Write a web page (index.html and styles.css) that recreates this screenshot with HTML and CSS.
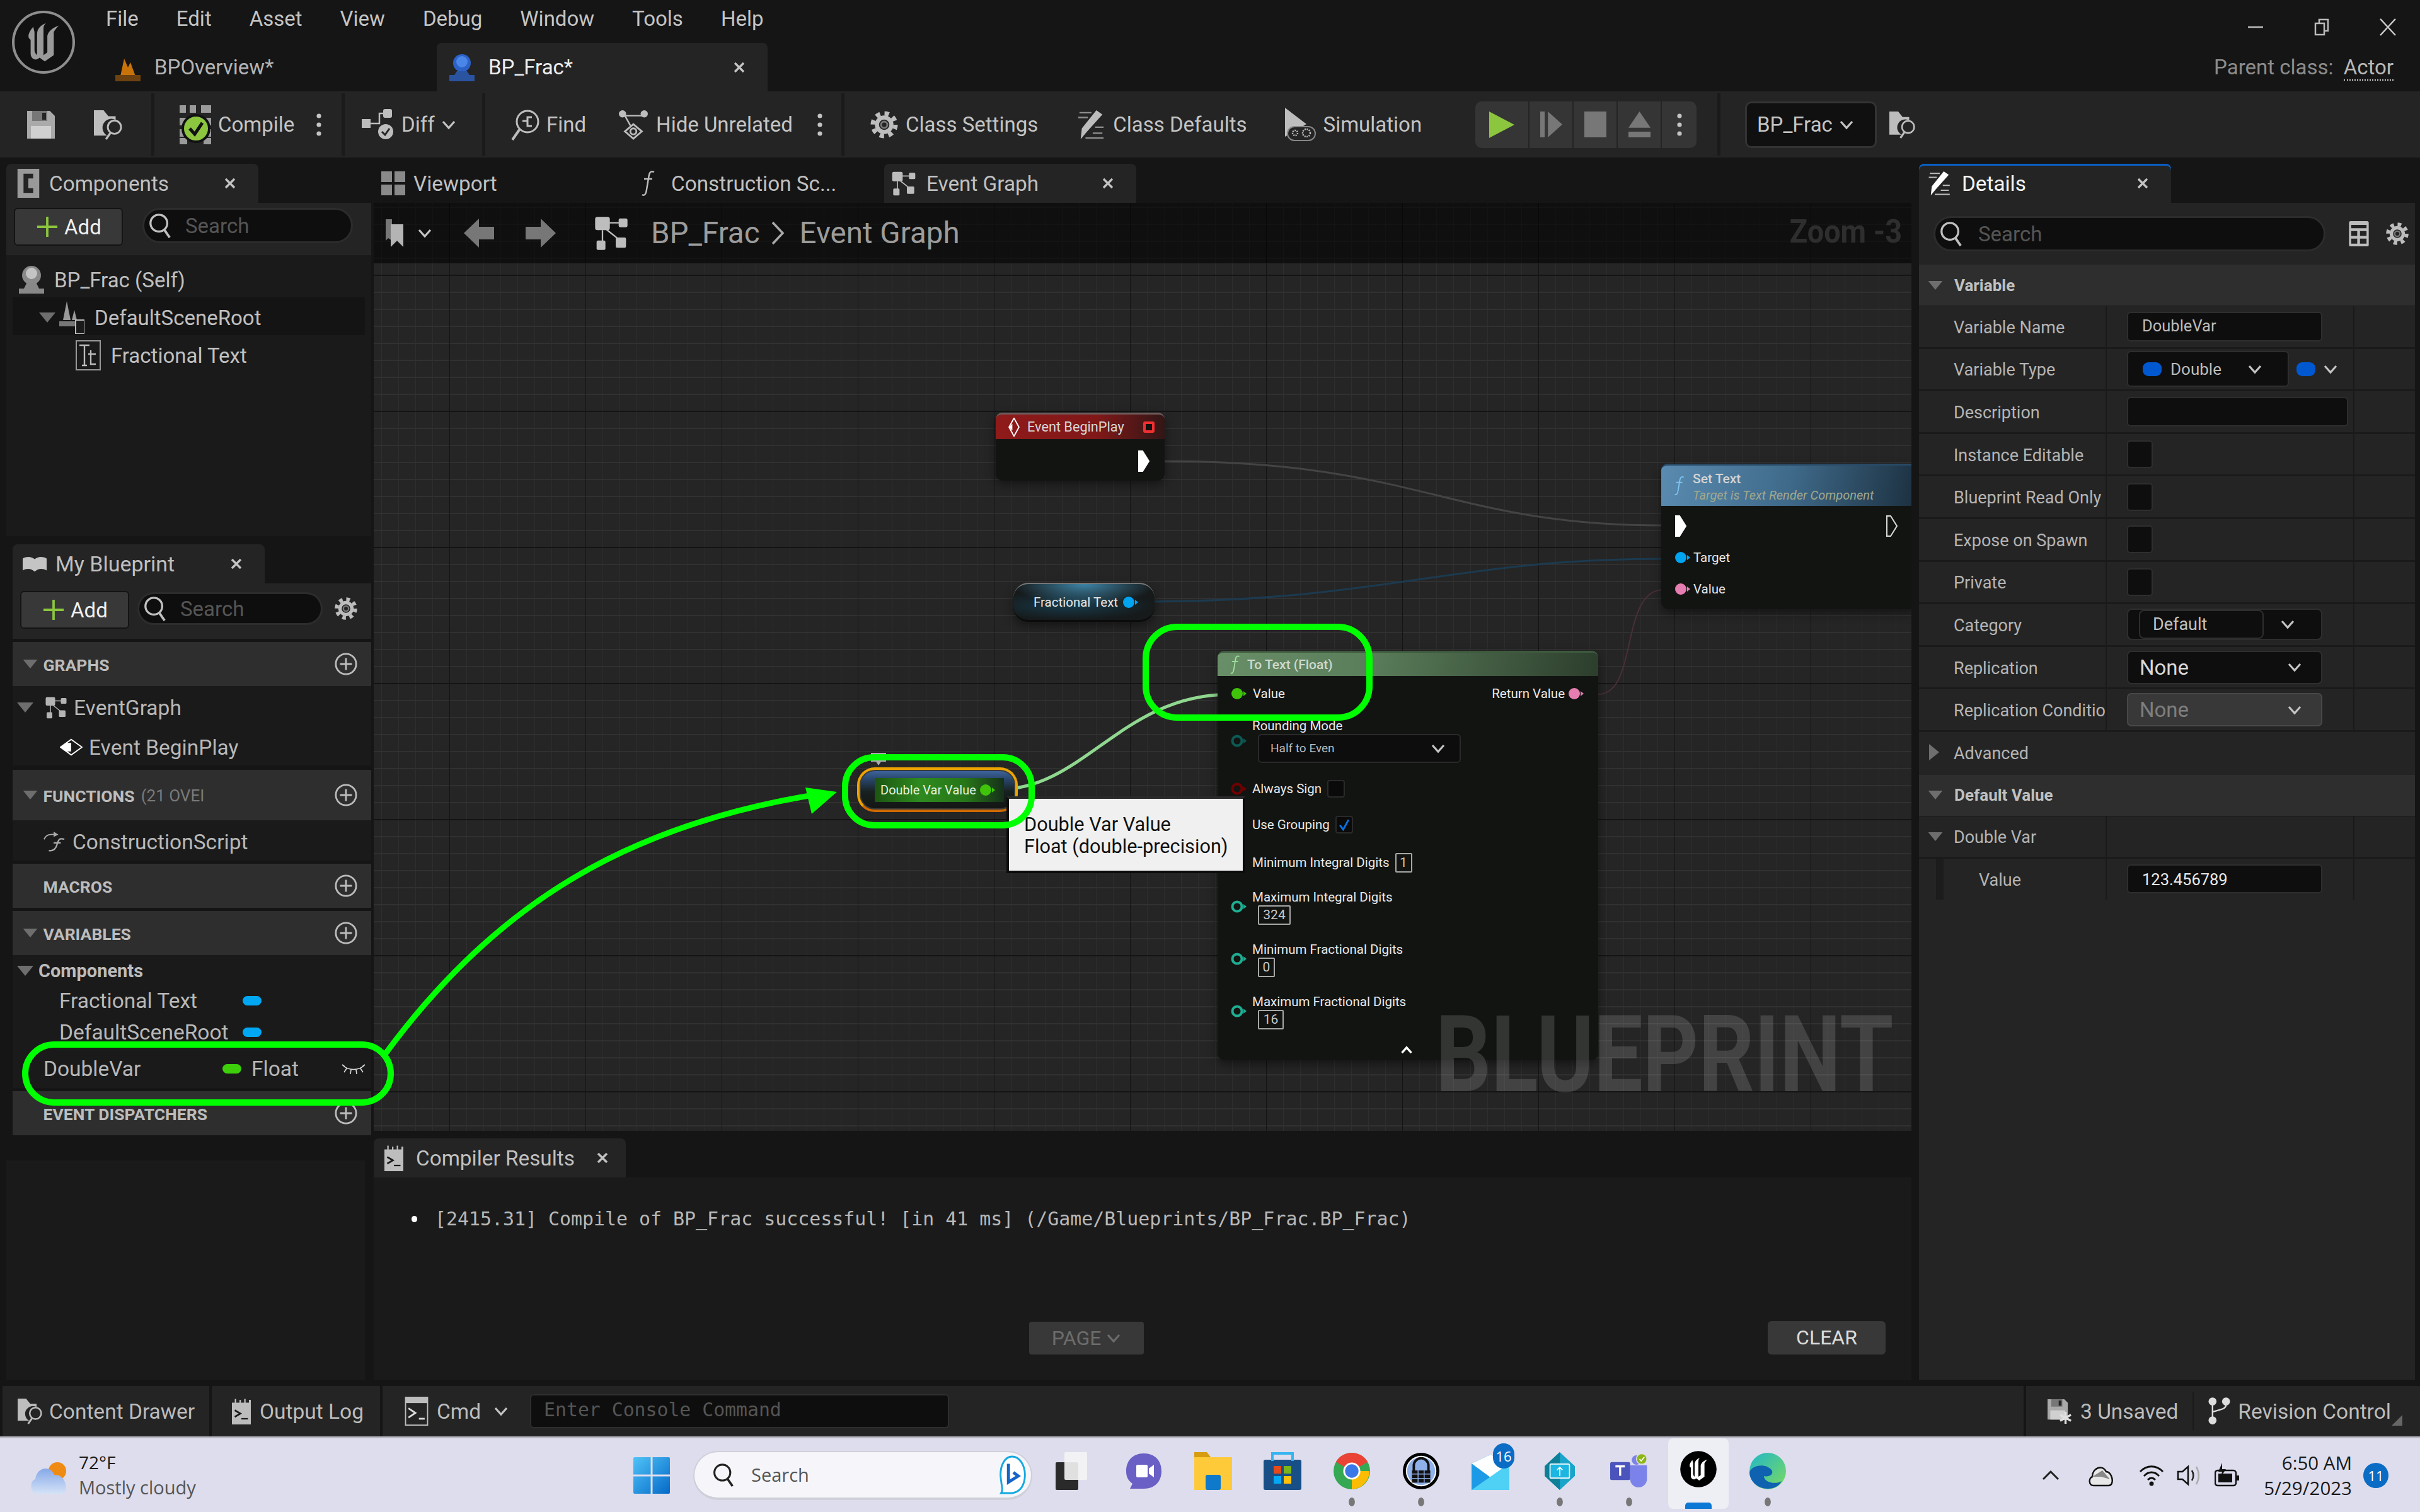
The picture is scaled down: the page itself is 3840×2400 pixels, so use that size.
FILE: index.html
```html
<!DOCTYPE html>
<html lang="en">
<head>
    <meta charset="UTF-8" />
    <title>BP_Frac - Unreal Editor</title>
    <link rel="stylesheet" href="styles.css">
</head>
<body>
    <svg class="defs" width="0" height="0">
        <symbol id="gear" viewBox="0 0 32 32">
            <circle cx="16" cy="16" r="12.5" fill="none" stroke="currentColor" stroke-width="5" stroke-dasharray="4.9 4.92"/>
            <circle cx="16" cy="16" r="8" fill="none" stroke="currentColor" stroke-width="4.5"/>
            <circle cx="16" cy="16" r="3.5" fill="none" stroke="#777" stroke-width="2"/>
        </symbol>
        <symbol id="chev" viewBox="0 0 24 16"><polyline points="3,3 12,13 21,3" fill="none" stroke="currentColor" stroke-width="3.2"/></symbol>
        <symbol id="search" viewBox="0 0 40 44">
            <circle cx="18" cy="18" r="14" fill="none" stroke="currentColor" stroke-width="3.5"/>
            <line x1="27" y1="29" x2="36" y2="42" stroke="currentColor" stroke-width="4"/>
        </symbol>
        <symbol id="close" viewBox="0 0 20 20"><path d="M3 3 17 17M17 3 3 17" stroke="currentColor" stroke-width="3.4" fill="none"/></symbol>
        <symbol id="plusc" viewBox="0 0 40 40">
            <circle cx="20" cy="20" r="17" fill="none" stroke="currentColor" stroke-width="3"/>
            <path d="M20 10V30M10 20H30" stroke="currentColor" stroke-width="3"/>
        </symbol>
        <symbol id="plus" viewBox="0 0 36 36"><path d="M18 1V35M1 18H35" stroke="#8cc63f" stroke-width="4"/></symbol>
        <symbol id="tri" viewBox="0 0 26 16"><path d="M0 0H26L13 16Z" fill="currentColor"/></symbol>
        <symbol id="graph" viewBox="0 0 48 48">
            <rect x="2" y="2" width="20" height="18" rx="3" fill="currentColor"/>
            <rect x="34" y="4" width="12" height="12" rx="2" fill="currentColor"/>
            <rect x="4" y="34" width="12" height="13" rx="2" fill="currentColor"/>
            <rect x="30" y="30" width="14" height="14" rx="2" fill="currentColor"/>
            <path d="M20 10H36M12 20V36M16 18 36 34" stroke="currentColor" stroke-width="2" fill="none"/>
        </symbol>
        <symbol id="floppy" viewBox="0 0 44 44">
            <path d="M0 0H36L44 8V44H0Z" fill="#aaa"/>
            <rect x="8" y="0" width="24" height="16" fill="#777"/>
            <rect x="24" y="3" width="6" height="11" fill="#242424"/>
            <rect x="6" y="24" width="32" height="20" fill="#d0d0d0"/>
        </symbol>
        <symbol id="folder" viewBox="0 0 48 52">
            <path d="M0 2H16L24 12H36V18A14 14 0 0 0 22 44H0Z" fill="#bdbdbd"/>
            <circle cx="34" cy="30" r="11" fill="none" stroke="#bdbdbd" stroke-width="3"/>
            <line x1="27" y1="40" x2="20" y2="50" stroke="#bdbdbd" stroke-width="3.5"/>
        </symbol>
        <symbol id="dots" viewBox="0 0 10 36"><circle cx="5" cy="4" r="3.6" fill="currentColor"/><circle cx="5" cy="18" r="3.6" fill="currentColor"/><circle cx="5" cy="32" r="3.6" fill="currentColor"/></symbol>
        <symbol id="pencil" viewBox="0 0 48 48">
            <path d="M32 0 42 7 16 36 6 48 8 30Z" fill="currentColor"/>
            <path d="M4 4H24M2 12H18M30 28H44M26 38H42M14 46H44" stroke="currentColor" stroke-width="2.5" opacity=".7"/>
        </symbol>
        <symbol id="pin" viewBox="0 0 25 20"><circle cx="10" cy="10" r="9" fill="currentColor"/><path d="M20 6 25 10 20 14Z" fill="currentColor"/></symbol>
        <symbol id="pin-o" viewBox="0 0 25 20"><circle cx="10" cy="10" r="7.5" fill="none" stroke="currentColor" stroke-width="4"/><path d="M20 6 25 10 20 14Z" fill="currentColor"/></symbol>
        <symbol id="exec" viewBox="0 0 20 36"><path d="M2 2H8L18 18 8 34H2Z" fill="currentColor" stroke="currentColor" stroke-width="2"/></symbol>
        <symbol id="exec-o" viewBox="0 0 20 36"><path d="M2 2H8L18 18 8 34H2Z" fill="none" stroke="currentColor" stroke-width="2"/></symbol>
        <symbol id="func" viewBox="0 0 24 44"><path d="M21 4C14 1 13 7 12 14L9 32C8 40 5 42 2 40M5 15H18" fill="none" stroke="currentColor" stroke-width="2.4"/></symbol>
        <symbol id="term" viewBox="0 0 40 56">
            <path d="M0 10H6V2H9V10H16V4H19V10H26V2H29V10H36V4H40V56H0Z" fill="#bdbdbd"/>
            <path d="M6 26 18 33 6 40" fill="none" stroke="#1a1a1a" stroke-width="3.5"/>
            <path d="M20 44H34" stroke="#1a1a1a" stroke-width="3"/>
        </symbol>
        <symbol id="actor" viewBox="0 0 40 44">
            <circle cx="20" cy="15" r="15" fill="#8a8a8a"/>
            <circle cx="20" cy="12" r="9" fill="#c4c4c4"/>
            <path d="M12 28H28L32 36H40V44H0V36H8Z" fill="#888"/>
        </symbol>
        <symbol id="ue" viewBox="0 0 100 100">
            <path d="M34 26C24 38 26 44 30 46V68C30 76 38 80 44 74L52 80 66 70V34C70 28 72 26 74 24 64 28 58 32 56 40V66L50 70V30C50 24 52 22 54 20 44 24 40 30 40 38V70C36 66 36 64 36 60V34Z" fill="currentColor"/>
        </symbol>
    </svg>

    <header class="titlebar">
        <svg class="ue-logo" viewBox="0 0 100 100">
            <circle cx="50" cy="50" r="47" fill="#111" stroke="#8e8e8e" stroke-width="4"/>
            <use href="#ue" class="ue-mark" width="100" height="100"/>
        </svg>
        <div class="title-mid">
            <nav class="menu">
                <span>File</span><span>Edit</span><span>Asset</span><span>View</span><span>Debug</span><span>Window</span><span>Tools</span><span>Help</span>
            </nav>
            <div class="doc-tabs">
                <div class="doc-tab">
                    <svg class="doc-icon" viewBox="0 0 40 44"><path d="M8 36 14 8 20 22 24 14 32 36Z" fill="#c8730a"/><rect x="0" y="34" width="40" height="10" fill="#6e4210"/></svg>
                    <span>BPOverview*</span>
                </div>
                <div class="doc-tab active">
                    <svg class="doc-icon" viewBox="0 0 40 44">
                        <circle cx="20" cy="15" r="14" fill="#2c62c8"/><circle cx="20" cy="13" r="9" fill="#4a86e8"/>
                        <path d="M12 28H28L32 34H40V44H0V34H8Z" fill="#2a53a0"/>
                    </svg>
                    <span>BP_Frac*</span>
                    <svg class="x-icon"><use href="#close"/></svg>
                </div>
            </div>
        </div>
        <div class="title-right">
            <div class="win-btns">
                <svg class="win-btn" viewBox="0 0 28 28"><path d="M2 14H26" stroke="#bbb" stroke-width="2.5"/></svg>
                <svg class="win-btn" viewBox="0 0 28 28"><path d="M4 8H18V26H4ZM10 8V2H24V20H18" fill="none" stroke="#bbb" stroke-width="2.5"/></svg>
                <svg class="win-btn" viewBox="0 0 28 28"><path d="M2 1 26 27M26 1 2 27" stroke="#ccc" stroke-width="2.5"/></svg>
            </div>
            <div class="parent-class">Parent class: <span class="parent-link">Actor</span></div>
        </div>
    </header>

    <section class="toolbar">
        <div class="tb-group g1">
            <svg class="tb-ic floppy-ic"><use href="#floppy"/></svg>
            <svg class="tb-ic"><use href="#folder"/></svg>
        </div>
        <div class="tb-group g2">
            <svg class="tb-ic compile-ic" viewBox="0 0 50 62">
                <path d="M0 0H10V12H0ZM16 0H26V12H16ZM34 0H50V12H34ZM0 20H10V32H0ZM42 20H50V32H42ZM0 38H10V50H0ZM42 38H50V50H42ZM0 52H12V62H0ZM38 52H50V62H38Z" fill="#9a9a9a"/>
                <circle cx="26" cy="37" r="21" fill="#8cc63f" stroke="#111" stroke-width="4"/>
                <path d="M16 37 24 46 36 28" fill="none" stroke="#111" stroke-width="5"/>
            </svg>
            <span class="tb-label">Compile</span>
            <svg class="dots-ic compile-dots"><use href="#dots"/></svg>
        </div>
        <div class="tb-group g3">
            <svg class="tb-ic diff-ic" viewBox="0 0 52 50">
                <rect x="0" y="16" width="14" height="14" fill="#bdbdbd"/><rect x="34" y="0" width="14" height="14" rx="3" fill="#bdbdbd"/>
                <path d="M14 23H28V7H34" stroke="#bdbdbd" stroke-width="2.5" fill="none"/>
                <circle cx="38" cy="36" r="12" fill="#bdbdbd"/><path d="M32 36 37 41 44 31" stroke="#242424" stroke-width="3" fill="none"/>
            </svg>
            <span class="tb-label">Diff</span>
            <svg class="chev-ic"><use href="#chev"/></svg>
        </div>
        <div class="tb-group g4">
            <svg class="tb-ic" viewBox="0 0 44 50">
                <circle cx="26" cy="20" r="17" fill="none" stroke="#bdbdbd" stroke-width="3"/>
                <path d="M13 33 2 49" stroke="#bdbdbd" stroke-width="4"/>
                <path d="M18 19H26V13H33M26 19V27H33" stroke="#bdbdbd" stroke-width="3" fill="none"/>
            </svg>
            <span class="tb-label">Find</span>
            <svg class="tb-ic hide-ic" viewBox="0 0 48 50">
                <circle cx="6" cy="7" r="6" fill="#bdbdbd"/><circle cx="42" cy="7" r="6" fill="#bdbdbd"/>
                <path d="M6 10H42M10 10 20 28" stroke="#bdbdbd" stroke-width="2.5"/>
                <path d="M10 36 24 24 38 36 24 48Z" fill="none" stroke="#bdbdbd" stroke-width="3"/>
                <circle cx="24" cy="36" r="5" fill="none" stroke="#bdbdbd" stroke-width="3"/>
            </svg>
            <span class="tb-label hide-label">Hide Unrelated</span>
            <svg class="dots-ic hide-dots"><use href="#dots"/></svg>
        </div>
        <div class="tb-group g5">
            <svg class="tb-ic"><use href="#gear"/></svg>
            <span class="tb-label">Class Settings</span>
            <svg class="tb-ic defaults-ic"><use href="#pencil"/></svg>
            <span class="tb-label">Class Defaults</span>
            <svg class="tb-ic sim-ic" viewBox="0 0 50 54">
                <path d="M0 0 34 26 0 46Z" fill="#bdbdbd"/>
                <rect x="4" y="30" width="44" height="22" rx="11" fill="#242424" stroke="#888" stroke-width="2"/>
                <circle cx="16" cy="40" r="4" fill="none" stroke="#bbb" stroke-width="2.5" stroke-dasharray="2 1.5"/>
                <circle cx="34" cy="40" r="6" fill="none" stroke="#bbb" stroke-width="2.5" stroke-dasharray="2 1.5"/>
            </svg>
            <span class="tb-label">Simulation</span>
        </div>
        <div class="play-group">
            <div class="play-seg seg-a"><svg class="seg-ic seg-play" viewBox="0 0 40 54" preserveAspectRatio="none"><path d="M0 0 40 27 0 54Z" fill="#8cc63f"/></svg></div>
            <div class="play-seg"><svg class="seg-ic" viewBox="0 0 40 54" preserveAspectRatio="none"><path d="M0 0H8V54H0ZM14 0 40 27 14 54Z" fill="#777"/></svg></div>
            <div class="play-seg"><svg class="seg-ic" viewBox="0 0 40 54" preserveAspectRatio="none"><rect x="0" y="0" width="40" height="54" fill="#777"/></svg></div>
            <div class="play-seg"><svg class="seg-ic" viewBox="0 0 40 54" preserveAspectRatio="none"><path d="M0 34 20 0 40 34ZM0 42H40V54H0Z" fill="#777"/></svg></div>
            <div class="play-seg seg-end"><svg class="dots-ic"><use href="#dots"/></svg></div>
        </div>
        <div class="tb-sep"></div>
        <div class="debug-select">
            <span>BP_Frac</span>
            <svg class="chev-ic"><use href="#chev"/></svg>
        </div>
        <svg class="tb-ic browse-ic"><use href="#folder"/></svg>
    </section>

    <main class="workspace">
        <div class="col-left">
            <div class="tab c-comp"><svg class="tab-ic" viewBox="0 0 36 48"><path d="M0 0H36V48H0Z" fill="#999"/><path d="M26 8H10V40H26V32H18V16H26Z" fill="#242424"/></svg><span class="tab-title">Components</span><svg class="x-icon tab-x"><use href="#close"/></svg></div>
            <div class="comp-panel">
                <div class="panel-bar">
                    <div class="add-btn"><svg class="plus-ic"><use href="#plus"/></svg><span>Add</span></div>
                    <div class="search-box comp-search"><svg class="search-ic"><use href="#search"/></svg><span>Search</span></div>
                </div>
                <div class="tree">
                    <div class="tree-row self-row"><svg class="row-ic"><use href="#actor"/></svg><span>BP_Frac (Self)</span></div>
                    <div class="tree-row root-row">
                        <svg class="tree-tri"><use href="#tri"/></svg>
                        <svg class="row-ic" viewBox="0 0 40 52"><path d="M12 0 18 30H6ZM24 14 28 30H20Z" fill="#999"/><rect x="0" y="32" width="30" height="8" fill="#777"/><rect x="26" y="30" width="14" height="22" fill="#1a1a1a" stroke="#bbb" stroke-width="2"/></svg>
                        <span>DefaultSceneRoot</span>
                    </div>
                    <div class="tree-row text-row"><svg class="row-ic" viewBox="0 0 40 48"><rect x="1" y="1" width="38" height="46" fill="none" stroke="#999" stroke-width="2"/><path d="M6 8H22M14 8V40M10 40H18M24 16V38H32M20 22H32" stroke="#bbb" stroke-width="2.4" fill="none"/></svg><span>Fractional Text</span></div>
                </div>
            </div>
            <div class="bp-panel">
                <div class="tab bp-tab">
                    <svg class="tab-ic book-ic" viewBox="0 0 40 26"><path d="M0 4C8 0 14 1 20 5 26 1 32 0 40 4V24C32 20 26 21 20 26 14 21 8 20 0 24Z" fill="#c4c4c4"/></svg>
                    <span class="tab-title">My Blueprint</span><svg class="x-icon tab-x"><use href="#close"/></svg>
                </div>
                <div class="panel-bar bp-bar">
                    <div class="add-btn"><svg class="plus-ic"><use href="#plus"/></svg><span>Add</span></div>
                    <div class="search-box bp-search"><svg class="search-ic"><use href="#search"/></svg><span>Search</span></div>
                    <svg class="bar-gear"><use href="#gear"/></svg>
                </div>
                <div class="sect s-graphs"><svg class="sect-tri"><use href="#tri"/></svg><b>GRAPHS</b><svg class="plus-c"><use href="#plusc"/></svg></div>
                <div class="item i-graph"><svg class="tree-tri"><use href="#tri"/></svg><svg class="item-ic"><use href="#graph"/></svg><span>EventGraph</span></div>
                <div class="item i-begin"><svg class="item-ic" viewBox="0 0 38 28"><path d="M19 1 37 14 19 27 1 14Z" fill="none" stroke="#fff" stroke-width="2"/><path d="M1 14 11 7H19V21H11Z" fill="#fff"/></svg><span>Event BeginPlay</span></div>
                <div class="sect s-funcs"><svg class="sect-tri"><use href="#tri"/></svg><b>FUNCTIONS</b><span class="sect-note">(21 OVEI</span><svg class="plus-c"><use href="#plusc"/></svg></div>
                <div class="item i-script"><svg class="item-ic" viewBox="0 0 38 36"><path d="M2 14C6 6 12 5 22 6" fill="none" stroke="#aaa" stroke-width="2"/><path d="M18 1 26 6 18 10Z" fill="#aaa"/><path d="M36 14C28 11 26 15 24 22 22 30 18 34 10 33M18 20H30" fill="none" stroke="#aaa" stroke-width="2.4"/></svg><span>ConstructionScript</span></div>
                <div class="sect s-macros"><b>MACROS</b><svg class="plus-c"><use href="#plusc"/></svg></div>
                <div class="sect s-vars"><svg class="sect-tri"><use href="#tri"/></svg><b>VARIABLES</b><svg class="plus-c"><use href="#plusc"/></svg></div>
                <div class="item i-cat"><svg class="tree-tri"><use href="#tri"/></svg><b>Components</b></div>
                <div class="item i-var"><span>Fractional Text</span><i class="type-pill blue"></i></div>
                <div class="item i-var i-var2"><span>DefaultSceneRoot</span><i class="type-pill blue"></i></div>
                <div class="item i-double">
                    <span class="dv-name">DoubleVar</span><i class="type-pill green"></i><span class="dv-type">Float</span>
                    <svg class="eye-ic" viewBox="0 0 38 20"><path d="M1 4C10 14 28 14 37 4M8 10 4 16M15 12 14 19M23 12 24 19M30 10 34 16M1 4 5 7M37 4 33 7" fill="none" stroke="#ddd" stroke-width="1.6"/></svg>
                </div>
                <div class="sect s-disp"><b>EVENT DISPATCHERS</b><svg class="plus-c"><use href="#plusc"/></svg></div>
            </div>
            <div class="left-fill"></div>
        </div>

        <div class="col-mid">
            <div class="graph-tabs">
                <div class="tab plain t-view"><svg class="tab-ic" viewBox="0 0 38 38"><path d="M0 0H17V17H0ZM21 0H38V17H21ZM0 21H17V38H0ZM21 21H38V38H21Z" fill="#8a8a8a"/></svg><span class="tab-title">Viewport</span></div>
                <div class="tab plain t-cons"><svg class="tab-ic f-ic"><use href="#func"/></svg><span class="tab-title">Construction Sc...</span></div>
                <div class="tab t-event"><svg class="tab-ic"><use href="#graph"/></svg><span class="tab-title">Event Graph</span><svg class="x-icon tab-x"><use href="#close"/></svg></div>
            </div>
            <div class="graph">
                <div class="crumbs">
                    <svg class="crumb-book" viewBox="0 0 30 44"><path d="M0 0H10V34L4 30 0 34Z" fill="#777"/><path d="M8 8H28V44L18 34 8 44Z" fill="#b4b4b4"/></svg>
                    <svg class="chev-ic crumb-chev"><use href="#chev"/></svg>
                    <svg class="crumb-arrow" viewBox="0 0 48 46"><path d="M0 23 24 0V13H48V33H24V46Z" fill="#777"/></svg>
                    <svg class="crumb-arrow fwd" viewBox="0 0 48 46"><path d="M48 23 24 0V13H0V33H24V46Z" fill="#777"/></svg>
                    <svg class="crumb-graph"><use href="#graph"/></svg>
                    <span class="crumb-text">BP_Frac</span>
                    <svg class="crumb-sep" viewBox="0 0 24 38" preserveAspectRatio="none"><polyline points="4,2 20,19 4,36" fill="none" stroke="#aaa" stroke-width="3.5"/></svg>
                    <span class="crumb-text">Event Graph</span>
                    <span class="zoom-label">Zoom -3</span>
                </div>

                <svg class="wires" viewBox="593 322 2440 1473">
                    <path d="M1848 732C2250 732 2300 834 2638 834" stroke="#444" stroke-width="3" fill="none"/>
                    <path d="M1805 955C2200 955 2300 887 2640 887" stroke="#1c3a4f" stroke-width="3" fill="none"/>
                    <path d="M2536 1102C2600 1102 2570 936 2640 936" stroke="#4a2f38" stroke-width="2" fill="none"/>
                    <path d="M1585 1253C1720 1253 1780 1102 1953 1102" stroke="#90d890" stroke-width="5" fill="none"/>
                </svg>

                <div class="node n-begin">
                    <div class="node-head">
                        <svg class="ev-ic" viewBox="0 0 28 46"><path d="M14 1 26 23 14 45 2 23Z" fill="none" stroke="#fff" stroke-width="3"/><path d="M2 23 10 15V31Z" fill="#fff"/></svg>
                        <span>Event BeginPlay</span><i class="ev-dot"></i>
                    </div>
                    <svg class="exec-ic begin-exec"><use href="#exec"/></svg>
                </div>

                <div class="node n-frac">
                    <span>Fractional Text</span><svg class="pin-ic c-blue"><use href="#pin"/></svg>
                </div>

                <div class="node n-set">
                    <div class="node-head">
                        <svg class="f-head"><use href="#func"/></svg>
                        <div class="head-lines"><b>Set Text</b><em>Target is Text Render Component</em></div>
                    </div>
                    <div class="pin-row exec-row">
                        <svg class="exec-ic"><use href="#exec"/></svg>
                        <svg class="exec-ic c-exec"><use href="#exec-o"/></svg>
                    </div>
                    <div class="pin-row set-pin"><svg class="pin-ic c-blue"><use href="#pin"/></svg><span>Target</span></div>
                    <div class="pin-row set-pin"><svg class="pin-ic c-pink"><use href="#pin"/></svg><span>Value</span></div>
                </div>

                <div class="node n-text">
                    <div class="node-head">
                        <svg class="f-head"><use href="#func"/></svg><b>To Text (Float)</b>
                    </div>
                    <div class="text-body">
                        <div class="pin-row r-value">
                            <svg class="pin-ic c-green"><use href="#pin"/></svg><span>Value</span>
                            <span class="ret">Return Value</span><svg class="pin-ic c-pink"><use href="#pin"/></svg>
                        </div>
                        <div class="pin-stack">
                            <svg class="pin-ic c-dim stack-pin rounding-pin"><use href="#pin-o"/></svg>
                            <span>Rounding Mode</span>
                            <div class="node-select"><span>Half to Even</span><svg class="chev-ic"><use href="#chev"/></svg></div>
                        </div>
                        <div class="pin-row r-check">
                            <svg class="pin-ic c-red"><use href="#pin-o"/></svg><span>Always Sign</span><i class="node-check"></i>
                        </div>
                        <div class="pin-row r-check r-plain r-group">
                            <span>Use Grouping</span>
                            <i class="node-check"><svg viewBox="0 0 28 28"><path d="M6 15 12 23 22 5" fill="none" stroke="#0a70e0" stroke-width="3.4"/></svg></i>
                        </div>
                        <div class="pin-row r-check r-plain r-minint"><span>Minimum Integral Digits</span><i class="num-box nb-1">1</i></div>
                        <div class="pin-stack r-maxint">
                            <svg class="pin-ic c-teal stack-pin"><use href="#pin-o"/></svg>
                            <span>Maximum Integral Digits</span><i class="num-box nb-3">324</i>
                        </div>
                        <div class="pin-stack">
                            <svg class="pin-ic c-teal stack-pin"><use href="#pin-o"/></svg>
                            <span>Minimum Fractional Digits</span><i class="num-box nb-1">0</i>
                        </div>
                        <div class="pin-stack">
                            <svg class="pin-ic c-teal stack-pin"><use href="#pin-o"/></svg>
                            <span>Maximum Fractional Digits</span><i class="num-box nb-2">16</i>
                        </div>
                    </div>
                    <svg class="node-fold" viewBox="0 0 24 16"><polyline points="3,13 12,3 21,13" fill="none" stroke="#fff" stroke-width="4"/></svg>
                </div>

                <svg class="comment-ic" viewBox="0 0 26 22"><path d="M1 1H25V15H17L13 21 9 15H1Z" fill="#aaa"/><path d="M6 5V11M11 5V11M16 5V11M21 5V11" stroke="#222" stroke-width="2.5"/></svg>
                <div class="node n-var">
                    <div class="var-band"><span>Double Var Value</span><svg class="pin-ic c-green"><use href="#pin"/></svg></div>
                </div>
                <div class="tooltip">Double Var Value<br>Float (double-precision)</div>
                <div class="watermark">BLUEPRINT</div>
            </div>

            <div class="compile-panel">
                <div class="tab c-tab"><svg class="tab-ic"><use href="#term"/></svg><span class="tab-title">Compiler Results</span><svg class="x-icon tab-x"><use href="#close"/></svg></div>
                <div class="compile-body">
                    <ul class="log"><li>[2415.31] Compile of BP_Frac successful! [in 41 ms] (/Game/Blueprints/BP_Frac.BP_Frac)</li></ul>
                    <div class="compile-foot">
                        <div class="btn-page"><span>PAGE</span><svg class="chev-ic"><use href="#chev"/></svg></div>
                        <div class="btn-clear">CLEAR</div>
                    </div>
                </div>
            </div>
        </div>

        <div class="col-right">
            <div class="tab details-tab"><svg class="tab-ic white-ic"><use href="#pencil"/></svg><span class="tab-title">Details</span><svg class="x-icon tab-x"><use href="#close"/></svg></div>
            <div class="details">
                <div class="details-search">
                    <div class="search-box d-search"><svg class="search-ic"><use href="#search"/></svg><span>Search</span></div>
                    <svg class="table-ic" viewBox="0 0 36 46"><rect width="36" height="46" rx="3" fill="#bdbdbd"/><path d="M4 7H32V13H4ZM4 18H15V27H4ZM20 18H32V27H20ZM4 32H15V41H4ZM20 32H32V41H20Z" fill="#242424"/></svg>
                    <svg class="d-gear"><use href="#gear"/></svg>
                </div>
                <div class="d-sect"><svg class="sect-tri"><use href="#tri"/></svg><b>Variable</b></div>
                <div class="d-rows">
                    <div class="d-row"><label>Variable Name</label><div class="d-val"><div class="inp">DoubleVar</div></div><div></div></div>
                    <div class="d-row"><label>Variable Type</label><div class="d-val">
                        <div class="type-select"><i class="type-pill navy"></i><span>Double</span><svg class="chev-ic"><use href="#chev"/></svg></div>
                        <i class="type-pill navy after"></i><svg class="chev-ic"><use href="#chev"/></svg>
                    </div><div></div></div>
                    <div class="d-row"><label>Description</label><div class="d-val"><div class="inp wide"></div></div><div></div></div>
                    <div class="d-row"><label>Instance Editable</label><div class="d-val"><i class="d-check"></i></div><div></div></div>
                    <div class="d-row"><label>Blueprint Read Only</label><div class="d-val"><i class="d-check"></i></div><div></div></div>
                    <div class="d-row"><label>Expose on Spawn</label><div class="d-val"><i class="d-check"></i></div><div></div></div>
                    <div class="d-row"><label>Private</label><div class="d-val"><i class="d-check"></i></div><div></div></div>
                    <div class="d-row"><label>Category</label><div class="d-val"><div class="cat-combo"><div class="cat-inner">Default</div><svg class="chev-ic"><use href="#chev"/></svg></div></div><div></div></div>
                    <div class="d-row"><label>Replication</label><div class="d-val"><div class="rep-select"><span>None</span><svg class="chev-ic"><use href="#chev"/></svg></div></div><div></div></div>
                    <div class="d-row"><label>Replication Conditio</label><div class="d-val"><div class="rep-select off"><span>None</span><svg class="chev-ic"><use href="#chev"/></svg></div></div><div></div></div>
                    <div class="d-row plain-row"><svg class="side-tri" viewBox="0 0 16 26"><path d="M0 0 16 13 0 26Z" fill="currentColor"/></svg><label>Advanced</label></div>
                </div>
                <div class="d-sect sect-default"><svg class="sect-tri"><use href="#tri"/></svg><b>Default Value</b></div>
                <div class="d-rows">
                    <div class="d-row"><label class="tri-label"><svg class="sect-tri"><use href="#tri"/></svg>Double Var</label><div class="d-val"></div><div></div></div>
                    <div class="d-row value-row"><label>Value</label><div class="d-val"><div class="inp bright">123.456789</div></div><div></div></div>
                </div>
            </div>
        </div>
    </main>

    <footer class="statusbar">
        <div class="st-item st-drawer"><svg class="st-ic"><use href="#folder"/></svg><span>Content Drawer</span></div>
        <div class="st-item st-log"><svg class="st-ic log-ic"><use href="#term"/></svg><span>Output Log</span></div>
        <div class="st-item st-cmd">
            <svg class="st-ic" viewBox="0 0 40 50"><rect x="1" y="1" width="38" height="48" fill="none" stroke="#bdbdbd" stroke-width="2"/><rect x="1" y="1" width="38" height="10" fill="#bdbdbd"/><path d="M6 20 18 28 6 36" fill="none" stroke="#ddd" stroke-width="3"/><path d="M24 38H34" stroke="#ddd" stroke-width="3"/></svg>
            <span>Cmd</span><svg class="chev-ic"><use href="#chev"/></svg>
            <div class="console">Enter Console Command</div>
        </div>
        <div class="st-item st-right">
            <svg class="st-ic" viewBox="0 0 42 46"><use href="#floppy" width="34" height="40"/><path d="M30 24V44M21 29 39 39M39 29 21 39" stroke="#e0e0e0" stroke-width="3.5"/></svg>
            <span>3 Unsaved</span>
            <i class="st-sep"></i>
            <svg class="st-ic rev-ic" viewBox="0 0 36 46"><circle cx="7" cy="7" r="6.5" fill="#ddd"/><circle cx="29" cy="7" r="6.5" fill="#ddd"/><circle cx="7" cy="38" r="6.5" fill="#ddd"/><path d="M7 7V38M29 7V12C29 20 20 20 7 24" stroke="#ddd" stroke-width="2.5" fill="none"/></svg>
            <span>Revision Control</span>
            <svg class="grip" viewBox="0 0 18 18"><path d="M18 0V18H0Z" fill="#666"/></svg>
        </div>
    </footer>

    <footer class="taskbar">
        <div class="weather">
            <svg class="weather-ic" viewBox="0 0 60 50">
                <defs><linearGradient id="cloudG" x1="0" y1="0" x2="0" y2="1"><stop offset="0" stop-color="#86a9e8"/><stop offset="1" stop-color="#d4e2f7"/></linearGradient></defs>
                <ellipse cx="43" cy="14" rx="14" ry="14" fill="#ef8a12"/>
                <path d="M10 50C0 50 -2 30 8 27 10 8 32 4 38 20 58 18 62 50 50 50Z" fill="url(#cloudG)"/>
            </svg>
            <div class="weather-text"><span class="w-temp">72°F</span><span class="w-desc">Mostly cloudy</span></div>
        </div>
        <svg class="start" viewBox="0 0 58 58">
            <defs><linearGradient id="winG" x1="0" y1="0" x2="1" y2="1"><stop offset="0" stop-color="#4fc3f7"/><stop offset="1" stop-color="#0569c8"/></linearGradient></defs>
            <path d="M0 2Q0 0 2 0H27.500V27.500H0ZM30.500 0H56Q58 0 58 2V27.500H30.500ZM0 30.500H27.500V58H2Q0 58 0 56ZM30.500 30.500H58V56Q58 58 56 58H30.500Z" fill="url(#winG)"/>
        </svg>
        <div class="task-search">
            <svg class="ts-ic"><use href="#search"/></svg><span>Search</span>
            <svg class="bing" viewBox="0 0 44 64">
                <path d="M22 2C34 2 43 16 43 32S36 60 22 62L4 62C8 56 4 50 3 32 3 16 10 2 22 2Z" fill="#fff" stroke="#14a9e0" stroke-width="3"/>
                <path d="M16 14V44L32 34 24 28" fill="none" stroke="#1565c8" stroke-width="5"/>
            </svg>
        </div>
        <div class="tiles">
            <div class="tile"><svg class="app" viewBox="0 0 60 60"><rect x="0" y="16" width="36" height="44" rx="2" fill="#2a2a2a"/><rect x="14" y="0" width="36" height="44" rx="2" fill="#f4f4f4" opacity=".9"/></svg></div>
            <div class="tile"><svg class="app" viewBox="0 0 60 60"><path d="M30 2C48 2 58 14 58 30S48 58 30 58H8L12 50C4 44 2 38 2 30 2 14 12 2 30 2Z" fill="#6a5fc4"/><rect x="18" y="20" width="18" height="20" rx="2" fill="#fff"/><path d="M38 26 46 20V40L38 34Z" fill="#fff"/></svg></div>
            <div class="tile"><svg class="app" viewBox="0 0 60 60"><path d="M0 0H20L26 8H60V60H0Z" fill="#ffca3a"/><path d="M0 0H20L26 8H0Z" fill="#d89c10"/><rect x="18" y="36" width="24" height="24" rx="3" fill="#0f7acb"/></svg></div>
            <div class="tile"><svg class="app" viewBox="0 0 60 60"><rect x="0" y="12" width="60" height="48" rx="3" fill="#194f87"/><path d="M14 14V2H46V14" fill="none" stroke="#35b4ef" stroke-width="4"/><rect x="16" y="22" width="12" height="12" fill="#e64a19"/><rect x="32" y="22" width="12" height="12" fill="#7cb518"/><rect x="16" y="38" width="12" height="12" fill="#03a9f4"/><rect x="32" y="38" width="12" height="12" fill="#ffc107"/></svg></div>
            <div class="tile"><svg class="app" viewBox="0 0 62 62"><circle cx="31" cy="31" r="30" fill="#34a853"/><path d="M31 31 5 16A30 30 0 0 1 57 16Z" fill="#ea4335"/><path d="M31 31H60A30 30 0 0 1 31 61Z" fill="#fbbc05"/><circle cx="31" cy="31" r="14" fill="#fff"/><circle cx="31" cy="31" r="11" fill="#3b78e7"/></svg><i class="tile-dot"></i></div>
            <div class="tile"><svg class="app" viewBox="0 0 62 62"><circle cx="31" cy="31" r="30" fill="#000"/><circle cx="31" cy="31" r="25" fill="#fff"/><circle cx="31" cy="31" r="23" fill="#8fb0e8"/><path d="M19 30V22A12 12 0 0 1 43 22V30" fill="none" stroke="#111" stroke-width="4"/><rect x="16" y="30" width="30" height="20" fill="#111"/><path d="M16 36H46M16 43H46M26 30V50M36 30V50" stroke="#8fb0e8" stroke-width="1.5"/></svg><i class="tile-dot"></i></div>
            <div class="tile mail"><svg class="app" viewBox="0 0 60 60"><path d="M0 18 30 4 60 18V60H0Z" fill="#1c9ae6"/><path d="M0 18 30 40 60 18 30 4Z" fill="#fff"/><path d="M0 60 60 18V60Z" fill="#4fd0f5"/></svg><i class="mail-badge">16</i></div>
            <div class="tile"><svg class="app" viewBox="0 0 56 70"><path d="M28 0 56 26V44L28 70 0 44V26Z" fill="#19a4c9"/><path d="M28 0V70L0 44V26Z" fill="#0d7f97"/><rect x="10" y="22" width="36" height="26" rx="2" fill="#1bb7e2" stroke="#fff" stroke-width="2"/><path d="M28 44V28M23 33 28 28 33 33" stroke="#fff" stroke-width="2" fill="none"/></svg><i class="tile-dot"></i></div>
            <div class="tile"><svg class="app" viewBox="0 0 72 70"><circle cx="50" cy="14" r="9" fill="#7b83eb"/><path d="M38 24H70V50A16 16 0 0 1 38 50Z" fill="#7b83eb"/><rect x="0" y="18" width="38" height="34" rx="3" fill="#4b53bc"/><path d="M10 26H28M19 26V44" stroke="#fff" stroke-width="4"/><circle cx="60" cy="12" r="10" fill="#8cb516" stroke="#ddd" stroke-width="2"/><path d="M56 12 59 16 65 8" fill="none" stroke="#fff" stroke-width="2"/></svg><i class="tile-dot"></i></div>
            <div class="tile ue-tile"><svg class="app" viewBox="0 0 100 100"><circle cx="50" cy="50" r="48" fill="#000"/><use href="#ue" class="ue-light" width="100" height="100"/></svg><i class="tile-bar"></i></div>
            <div class="tile"><svg class="app" viewBox="0 0 60 60"><defs><linearGradient id="edgeG" x1="0" y1="0" x2="1" y2="1"><stop offset="0" stop-color="#22b7c9"/><stop offset="1" stop-color="#7bdb5e"/></linearGradient></defs><circle cx="30" cy="30" r="29" fill="url(#edgeG)"/><path d="M30 58C12 58 1 44 1 32 4 22 24 16 36 28 40 34 34 40 24 38 24 48 42 52 52 46 48 54 40 58 30 58Z" fill="#0f62b0"/></svg><i class="tile-dot"></i></div>
        </div>
        <div class="tray">
            <svg class="tray-chev" viewBox="0 0 28 16"><polyline points="2,14 14,2 26,14" fill="none" stroke="#222" stroke-width="3"/></svg>
            <svg class="tray-ic tray-cloud" viewBox="0 0 40 40"><path d="M8 36C0 36 0 24 6 22 6 8 22 2 28 14 38 14 42 36 32 36Z" fill="#e8e8e8" stroke="#111" stroke-width="2.500"/><path d="M6 22 22 12 34 26 20 22Z" fill="#888"/></svg>
            <svg class="tray-ic" viewBox="0 0 40 40"><path d="M2 14C12 3 28 3 38 14M8 21C15 13 25 13 32 21M14 27C18 23 22 23 26 27" fill="none" stroke="#111" stroke-width="2.800"/><circle cx="20" cy="33" r="3.500" fill="#111"/></svg>
            <svg class="tray-ic" viewBox="0 0 40 40"><path d="M2 14H9L18 6V34L9 26H2Z" fill="none" stroke="#111" stroke-width="2.500"/><path d="M24 12C27 17 27 23 24 28" fill="none" stroke="#222" stroke-width="2.500"/><path d="M31 6C36 15 36 25 31 34" fill="none" stroke="#aaa" stroke-width="2.500"/></svg>
            <svg class="tray-ic tray-batt" viewBox="0 0 40 40"><rect x="1" y="12" width="33" height="24" rx="4" fill="none" stroke="#111" stroke-width="2.500"/><rect x="6" y="17" width="22" height="14" fill="#111"/><rect x="34" y="20" width="5" height="8" fill="#111"/><path d="M12 0 6 14H12L10 22 18 10H12Z" fill="#111"/></svg>
            <div class="clock"><span>6:50 AM</span><span>5/29/2023</span></div>
            <i class="notif">11</i>
        </div>
    </footer>

    <svg class="annotations" viewBox="0 0 3840 2400">
        <rect x="40" y="1658" width="580" height="92" rx="46" fill="none" stroke="#00ff00" stroke-width="10"/>
        <rect x="1341" y="1202" width="296" height="108" rx="46" fill="none" stroke="#00ff00" stroke-width="10"/>
        <rect x="1818" y="995" width="355" height="144" rx="50" fill="none" stroke="#00ff00" stroke-width="10"/>
        <path d="M612 1672C790 1430 1000 1310 1290 1262" fill="none" stroke="#00ff00" stroke-width="9"/>
        <path d="M1278 1250 1328 1257 1288 1292Z" fill="#00ff00"/>
    </svg>
</body>
</html>
```

FILE: styles.css
```css
* {
    box-sizing: border-box;
}

body {
    margin: 0;
    width: 3840px;
    height: 2400px;
    overflow: hidden;
    position: relative;
    display: flex;
    flex-direction: column;
    background: #151515;
    color: #c0c0c0;
    font-family: Roboto, sans-serif;
    font-size: 33px;
}

.defs {
    position: absolute;
}

i {
    font-style: normal;
    display: block;
}

svg {
    display: block;
    flex: none;
}

/* title bar */
.titlebar {
    height: 145px;
    display: flex;
    flex: none;
}

.ue-logo {
    width: 102px;
    height: 104px;
    margin: 15px 48px 0 18px;
}

.ue-mark {
    color: #9a9a9a;
}

.title-mid {
    display: flex;
    flex-direction: column;
}

.menu {
    height: 68px;
    display: flex;
    gap: 60px;
    padding-top: 11px;
    color: #c4c4c4;
    line-height: 38px;
}

.doc-tabs {
    display: flex;
    height: 77px;
}

.doc-tab {
    width: 525px;
    display: flex;
    align-items: center;
    padding-left: 15px;
    color: #b4b4b4;
    border-radius: 8px 8px 0 0;
}

.doc-tab.active {
    background: #242424;
    padding-left: 20px;
    color: #eee;
}

.doc-icon {
    width: 40px;
    height: 44px;
    margin-right: 22px;
}

.x-icon {
    width: 20px;
    height: 20px;
    color: #c4c4c4;
}

.doc-tab .x-icon {
    margin-left: auto;
    margin-right: 35px;
}

.title-right {
    margin-left: auto;
    padding-right: 37px;
    display: flex;
    flex-direction: column;
    align-items: flex-end;
}

.win-btns {
    display: flex;
    gap: 77px;
    height: 75px;
    padding-top: 29px;
}

.win-btn {
    width: 28px;
    height: 28px;
}

.parent-class {
    color: #8c8c8c;
    line-height: 40px;
    margin: 12px 5px 0 0;
}

.parent-link {
    color: #b8b8b8;
    margin-left: 8px;
    border-bottom: 2px dotted #ccc;
}

/* main toolbar */
.toolbar {
    height: 105px;
    flex: none;
    display: flex;
    align-items: center;
    background: #242424;
}

.tb-group {
    height: 99px;
    display: flex;
    align-items: center;
    border-right: 5px solid #1a1a1a;
}

.tb-ic {
    width: 46px;
    height: 50px;
    color: #bdbdbd;
}

.tb-label {
    color: #c4c4c4;
    margin-left: 11px;
}

.hide-label { margin-left: 13px; }

.g1 { width: 245px; padding-left: 43px; gap: 62px; }
.g2 { width: 302px; padding-left: 40px; }
.g3 { width: 223px; padding-left: 27px; }
.g4 { width: 570px; padding-left: 40px; }
.g5 { width: 962px; padding-left: 40px; border-right: none; height: 80px; }

.floppy-ic { width: 44px; height: 44px; }
.compile-ic { width: 50px; height: 62px; }
.diff-ic { width: 52px; height: 50px; }
.hide-ic { margin-left: 52px; }
.defaults-ic { margin-left: 62px; }
.sim-ic { width: 50px; height: 54px; margin-left: 60px; }
.browse-ic { margin-left: 20px; width: 42px; height: 46px; }

.dots-ic {
    width: 10px;
    height: 36px;
    color: #c4c4c4;
}

.compile-dots { margin-left: 34px; }
.hide-dots { margin-left: 38px; }

.chev-ic {
    width: 24px;
    height: 16px;
    color: #c4c4c4;
}

.g3 .chev-ic { margin-left: 10px; }

.play-group {
    display: flex;
    height: 74px;
    margin-left: 39px;
    border-radius: 10px;
    overflow: hidden;
    gap: 2px;
}

.play-seg {
    width: 68px;
    background: #353535;
    display: flex;
    align-items: center;
    justify-content: center;
}

.seg-a { width: 84px; }
.seg-end { width: 55px; }

.seg-ic {
    width: 35px;
    height: 41px;
}

.seg-play {
    width: 40px;
    height: 42px;
}

.tb-sep {
    width: 5px;
    height: 99px;
    background: #1a1a1a;
    margin-left: 33px;
}

.debug-select {
    width: 209px;
    height: 74px;
    margin-left: 39px;
    background: #101010;
    border: 3px solid #333;
    border-radius: 10px;
    display: flex;
    align-items: center;
    gap: 10px;
    padding-left: 16px;
    color: #c4c4c4;
}

/* workspace */
.workspace {
    height: 1950px;
    flex: none;
    padding: 10px 0 10px 10px;
    display: grid;
    grid-template-columns: 579px 2440px 795px;
    column-gap: 4px;
}

.workspace > .col-right {
    margin-left: 8px;
}

.col-left, .col-mid, .col-right {
    display: flex;
    flex-direction: column;
    min-height: 0;
}

.tab {
    width: 400px;
    height: 62px;
    flex: none;
    display: flex;
    align-items: center;
    background: #242424;
    border-radius: 8px 8px 0 0;
    padding-left: 16px;
}

.tab.plain {
    background: none;
}

.tab-ic {
    width: 38px;
    height: 46px;
    color: #bdbdbd;
}

.tab-title {
    margin-left: 16px;
    color: #c0c0c0;
    font-size: 33.300px;
}

.c-comp .tab-title {
    margin-left: 14px;
}

.bp-tab .tab-title {
    font-size: 34px;
    margin-left: 14px;
}

.tab-x {
    margin-left: auto;
    margin-right: 35px;
}

/* components + my blueprint */
.comp-panel {
    height: 529px;
    flex: none;
    background: #1a1a1a;
}

.panel-bar {
    height: 83px;
    display: flex;
    align-items: flex-start;
    background: #242424;
    padding: 8px 0 0 12px;
}

.add-btn {
    width: 173px;
    height: 60px;
    flex: none;
    display: flex;
    align-items: center;
    padding-left: 34px;
    gap: 10px;
    background: #383838;
    border: 2px solid #141414;
    border-radius: 6px;
    color: #f0f0f0;
}

.plus-ic {
    width: 34px;
    height: 34px;
}

.search-box {
    height: 56px;
    display: flex;
    align-items: center;
    background: #0e0e0e;
    border: 3px solid #2c2c2c;
    border-radius: 28px;
    color: #555;
    padding-left: 6px;
}

.search-ic {
    width: 38px;
    height: 42px;
    color: #c0c0c0;
}

.search-box span {
    margin-left: 21px;
}

.comp-search {
    width: 334px;
    margin-left: 31px;
}

.tree {
    padding-top: 7px;
}

.tree-row {
    height: 60px;
    padding-top: 4px;
    display: flex;
    align-items: center;
    color: #c0c0c0;
}

.row-ic {
    width: 40px;
    height: 48px;
    color: #999;
}

.tree-tri {
    width: 26px;
    height: 16px;
    color: #6e6e6e;
}

.self-row { padding-left: 20px; }
.self-row span { margin-left: 16px; }
.root-row { margin: 0 10px; padding-left: 42px; background: #141414; }
.root-row .row-ic { margin-left: 6px; height: 52px; }
.root-row span { margin-left: 16px; }
.text-row { padding-left: 110px; }
.text-row span { margin-left: 16px; }

.bp-panel {
    margin: 13px 0 0 10px;
    display: flex;
    flex-direction: column;
}

.book-ic {
    width: 38px;
    height: 26px;
}

.bp-bar {
    height: 88px;
    padding-top: 12px;
}

.bp-search {
    width: 294px;
    height: 52px;
    margin-left: 13px;
    margin-top: 2px;
}

.bar-gear {
    width: 38px;
    height: 38px;
    color: #bdbdbd;
    margin: 9px 0 0 18px;
}

.sect {
    height: 70px;
    display: flex;
    align-items: center;
    background: #2e2e2e;
    padding: 2px 0 0 48.5px;
    margin-top: 5px;
    font-size: 26.500px;
    position: relative;
}

.sect b {
    color: #bcbcbc;
}

.sect-tri {
    width: 26px;
    height: 14px;
    color: #6e6e6e;
}

.sect .sect-tri {
    position: absolute;
    left: 15px;
    top: 50%;
    margin-top: -7px;
}

.sect-note {
    color: #7a7a7a;
    margin-left: 10px;
    font-size: 26px;
}

.plus-c {
    width: 38px;
    height: 38px;
    color: #bbb;
    position: absolute;
    left: 510px;
    top: 16px;
}

.s-funcs { height: 80px; margin-top: 7px; }
.s-funcs .plus-c { top: 21px; }

.item {
    display: flex;
    align-items: center;
    color: #b8b8b8;
    background: #1a1a1a;
    font-size: 33.500px;
    padding-top: 4px;
}

.item-ic {
    width: 36px;
    height: 36px;
    color: #b4b4b4;
}

.i-graph { height: 64px; padding-left: 7px; }
.i-graph .item-ic { margin-left: 18px; }
.i-graph span { margin-left: 10px; }
.i-begin { height: 62px; padding-left: 75px; }
.i-begin span { margin-left: 10px; }
.i-script { height: 64px; padding-left: 48px; margin-top: 0; }
.i-script span { margin-left: 11px; }
.i-cat { height: 46px; padding-left: 7px; }
.i-cat b { margin-left: 8px; font-size: 29px; color: #bcbcbc; }
.i-var { height: 49px; padding-left: 74px; }
.i-var .type-pill { margin-left: auto; margin-right: 174px; }
.i-var2 { height: 50px; }
.i-double { height: 66px; padding-left: 49px; }
.dv-name { width: 284px; }
.dv-type { margin-left: 16px; }
.eye-ic { width: 38px; height: 20px; margin-left: auto; margin-right: 9px; }
.s-disp { margin-top: 5px; }

.type-pill {
    width: 30px;
    height: 15px;
    border-radius: 8px;
}

.type-pill.blue { background: #00a8f4; }
.type-pill.green { background: #3ccf0a; }
.type-pill.navy { background: #0058d0; height: 22px; border-radius: 9px; }

.left-fill {
    margin-top: 40px;
    width: 569px;
    flex: 1;
    background: #1a1a1a;
}

/* graph */
.graph-tabs {
    display: flex;
    height: 62px;
    flex: none;
}

.t-view { width: 390px; padding-left: 12px; }
.t-view .tab-ic { height: 38px; }
.t-view .tab-title { margin-left: 13px; }
.t-cons { width: 420px; padding-left: 34px; }
.t-cons .tab-ic { width: 24px; }
.t-cons .tab-title { margin-left: 24px; }
.t-event { width: 400px; padding-left: 11px; }
.t-event .tab-title { margin-left: 16px; }
.t-event .tab-ic { width: 40px; height: 48px; }
.t-event .tab-x { margin-right: 35px; }

.graph {
    height: 1473px;
    flex: none;
    position: relative;
    overflow: hidden;
    background-color: #252525;
    background-image:
        linear-gradient(#141414 2px, transparent 2px),
        linear-gradient(90deg, #141414 1px, transparent 1px),
        linear-gradient(#313131 2px, transparent 2px),
        linear-gradient(90deg, #2e2e2e 1px, transparent 1px);
    background-size: 216px 216px, 216px 216px, 27px 27px, 27px 27px;
    background-position: 0 114px, 120px 0, 0 6px, 12px 0;
}

.crumbs {
    height: 96px;
    display: flex;
    align-items: center;
    background: rgba(0, 0, 0, 0.58);
    padding-left: 19px;
    position: relative;
}

.crumb-book { width: 30px; height: 44px; }
.crumb-chev { margin-left: 20px; }
.crumb-arrow { width: 48px; height: 46px; margin-left: 50px; }
.crumb-arrow.fwd { margin-left: 50px; }
.crumb-graph { width: 56px; height: 60px; margin-left: 60px; color: #bdbdbd; }

.crumb-text {
    font-size: 47.500px;
    color: #9c9c9c;
}

.crumb-graph + .crumb-text { margin-left: 35px; }

.crumb-sep {
    width: 24px;
    height: 38px;
    margin: 0 23px 0 16px;
}

.zoom-label {
    position: absolute;
    right: 15px;
    top: 15px;
    font-size: 52px;
    font-weight: 700;
    color: #2e2e2e;
    transform: scaleX(0.9);
    transform-origin: right center;
}

.wires {
    position: absolute;
    left: 0;
    top: 0;
    width: 2440px;
    height: 1473px;
}

.node {
    position: absolute;
    background: #121412;
    border-radius: 12px;
    box-shadow: 0 6px 16px rgba(0, 0, 0, 0.45);
    font-size: 20.500px;
    color: #e8e8e8;
}

.node-head {
    display: flex;
    align-items: center;
    border-radius: 10px 10px 0 0;
}

.exec-ic {
    width: 20px;
    height: 36px;
    color: #fff;
}

.pin-ic {
    width: 25px;
    height: 20px;
}

.c-blue { color: #00a4f0; }
.c-pink { color: #e67db0; }
.c-green { color: #3fc40a; }
.c-dim { color: #0d5a55; }
.c-teal { color: #1fae92; }
.c-red { color: #700000; }
.c-exec { color: #dcdcdc; }

.n-begin {
    left: 987px;
    top: 333px;
    width: 268px;
    height: 108px;
}

.n-begin .node-head {
    height: 42px;
    padding-left: 16px;
    background: linear-gradient(90deg, #8f1a1a, #801818 60%, #321616);
    border-top: 3px solid #6e5a5a;
    font-size: 21.700px;
    color: #d8d8d8;
}

.ev-ic { width: 26px; height: 30px; margin-right: 8px; }

.ev-dot {
    width: 18px;
    height: 18px;
    margin-left: 30px;
    background: #111;
    border: 4px solid #f03030;
    border-radius: 3px;
}

.begin-exec { margin: 17px 0 0 225px; }

.n-frac {
    left: 1015px;
    top: 603px;
    width: 224px;
    height: 62px;
    border-radius: 24px;
    display: flex;
    align-items: center;
    padding-left: 32px;
    gap: 7px;
    background: radial-gradient(ellipse 50% 60% at 50% 0, #3e84a6, transparent), radial-gradient(ellipse 60% 40% at 40% 60%, #173a4a, transparent), #161a1b;
    border-top: 2px solid #777;
    border-bottom: 3px solid #0b0b0b;
}

.n-set {
    left: 2043px;
    top: 414px;
    width: 404px;
    height: 231px;
}

.n-set .node-head {
    height: 67px;
    padding-left: 20px;
    background: linear-gradient(100deg, #5a8bb0, #3f6a8a 50%, #1c3040);
    border-top: 3px solid #2a4a66;
}

.f-head {
    width: 18px;
    height: 34px;
    margin-right: 12px;
    color: #7fc4f0;
}

.head-lines {
    display: flex;
    flex-direction: column;
    padding-top: 4px;
    gap: 2px;
}

.head-lines b {
    font-weight: 500;
    color: #d4d4d4;
    font-size: 21px;
}

.head-lines em {
    color: #a0a88e;
    font-size: 20px;
}

.pin-row {
    display: flex;
    align-items: center;
}

.exec-row {
    justify-content: space-between;
    padding: 13px 28px 0 21px;
    height: 50px;
}

.set-pin {
    gap: 5px;
    padding-left: 21px;
    margin-top: 28px;
    height: 22px;
}

.exec-row + .set-pin {
    margin-top: 21px;
}

.n-text {
    left: 1339px;
    top: 711px;
    width: 604px;
    height: 650px;
}

.n-text .node-head {
    height: 40px;
    padding-left: 19px;
    background: linear-gradient(100deg, #688f68, #5a7d5a 40%, #2c3d2c);
    border-top: 3px solid #3e5a3e;
}

.n-text .f-head {
    color: #9fe39f;
    height: 32px;
    margin-right: 10px;
}

.n-text .node-head b {
    font-weight: 500;
    font-size: 21px;
    color: #cfd8cf;
}

.text-body {
    display: flex;
    flex-direction: column;
    gap: 27px;
    padding: 16px 23px 0 21px;
}

.r-value {
    height: 24px;
    gap: 10px;
}

.ret {
    margin-left: auto;
    margin-right: -5px;
}

.pin-stack {
    position: relative;
    padding-left: 34px;
    display: flex;
    flex-direction: column;
    align-items: flex-start;
    line-height: 24px;
}

.stack-pin {
    position: absolute;
    left: 0;
    top: 17px;
}

.rounding-pin {
    top: 26px;
}

.node-select {
    width: 322px;
    height: 46px;
    margin: 1px 0 0 9px;
    display: flex;
    align-items: center;
    justify-content: space-between;
    padding: 0 22px 0 18px;
    background: #0d0d0d;
    border: 2px solid #2a2a2a;
    border-radius: 6px;
    color: #bbb;
    font-size: 19px;
}

.r-check {
    gap: 9px;
    height: 28px;
}

.r-plain {
    padding-left: 34px;
}

.r-group { margin-top: 2px; }
.r-minint { margin-top: 5px; }
.r-maxint { margin-top: 2px; }

.node-check {
    width: 28px;
    height: 28px;
    background: #0a0a0a;
    border: 2px solid #2a2a2a;
    border-radius: 4px;
}

.num-box {
    height: 31px;
    margin: 1px 0 0 9px;
    text-align: center;
    line-height: 27px;
    border: 2px solid #a8a8a8;
    border-radius: 2px;
    color: #c8c8c8;
    font-size: 21px;
}

.r-plain .num-box { margin: 0; }
.nb-1 { width: 27px; }
.nb-2 { width: 41px; }
.nb-3 { width: 52px; }

.node-fold {
    width: 20px;
    height: 14px;
    margin: 26px 0 0 290px;
}

.n-var {
    left: 767px;
    top: 896px;
    width: 255px;
    height: 71px;
    border-radius: 28px;
    background: linear-gradient(#4068a0 0, #2a4870 22%, #17211f 55%, #131513);
    border: 4px solid #eea400;
    border-bottom-color: #cf6a00;
    box-shadow: inset 0 0 0 2px #3b3b3b;
}

.var-band {
    position: absolute;
    left: 24px;
    top: 13px;
    width: 205px;
    height: 38px;
    display: flex;
    align-items: center;
    padding-left: 9px;
    gap: 5px;
    background: linear-gradient(90deg, #1c5512, #2e8a1e 35%, #277618 70%, #16301a);
    color: #e4f2e0;
    font-size: 20px;
}

.comment-ic {
    position: absolute;
    left: 788px;
    top: 872px;
    width: 26px;
    height: 22px;
}

.tooltip {
    position: absolute;
    left: 1004px;
    top: 942px;
    width: 379px;
    height: 122px;
    padding: 23px 0 0 24px;
    background: #f0f0f0;
    border: 4px solid #0c0c0c;
    border-top-color: #2a2a2a;
    color: #111;
    font-size: 30.700px;
    line-height: 35px;
    white-space: nowrap;
}

.watermark {
    position: absolute;
    left: 1685px;
    top: 1275px;
    font-size: 168px;
    line-height: 155px;
    font-weight: 700;
    color: rgba(255, 255, 255, 0.14);
    transform: scaleX(0.82);
    transform-origin: left center;
}

/* compiler results */
.compile-panel {
    margin-top: 12px;
    flex: 1;
    display: flex;
    flex-direction: column;
    min-height: 0;
}

.c-tab {
    padding-left: 17px;
}

.c-tab .tab-ic {
    width: 30px;
    height: 42px;
}

.c-tab .tab-title {
    margin-left: 20px;
}

.c-tab .tab-x {
    margin-right: 27px;
}

.compile-body {
    flex: 1;
    display: flex;
    flex-direction: column;
    background: #1a1a1a;
}

.log {
    margin: 46px 0 0;
    padding: 0 0 0 97px;
    list-style: none;
    font-family: "DejaVu Sans Mono", monospace;
    font-size: 29.920px;
    line-height: 40px;
    color: #b8b8b8;
}

.log li {
    position: relative;
}

.log li::before {
    content: "";
    position: absolute;
    left: -37px;
    top: 15px;
    width: 9px;
    height: 10px;
    border-radius: 5px;
    background: #fff;
}

.compile-foot {
    margin-top: auto;
    padding: 0 41px 40px 1040px;
    display: flex;
    align-items: flex-end;
}

.btn-page {
    width: 182px;
    height: 52px;
    display: flex;
    align-items: center;
    justify-content: center;
    gap: 8px;
    background: #383838;
    color: #6c6c6c;
    border-radius: 4px;
    font-size: 32px;
}

.btn-page .chev-ic {
    color: #6c6c6c;
}

.btn-clear {
    width: 187px;
    height: 53px;
    margin-left: auto;
    text-align: center;
    line-height: 53px;
    background: #383838;
    color: #dcdcdc;
    border-radius: 6px;
    font-size: 32px;
}

/* details */
.details-tab {
    background: #242424;
    box-shadow: inset 0 3px 0 #0a5ec4;
    padding-left: 14px;
}

.details-tab .tab-title {
    color: #f4f4f4;
    margin-left: 16px;
}

.white-ic {
    color: #fff;
    height: 44px;
}

.details {
    width: 787px;
    flex: 1;
    background: #242424;
    display: flex;
    flex-direction: column;
}

.details-search {
    height: 98px;
    display: flex;
    align-items: center;
    padding: 0 0 0 23px;
}

.d-search {
    width: 622px;
}

.d-search span {
    margin-left: 24px;
}

.table-ic {
    width: 36px;
    height: 40px;
    margin-left: 35px;
}

.d-gear {
    width: 38px;
    height: 38px;
    margin-left: 24px;
    color: #bdbdbd;
}

.d-sect {
    height: 65px;
    flex: none;
    display: flex;
    align-items: center;
    background: #2e2e2e;
    padding-left: 13px;
    font-size: 26px;
    gap: 17px;
}

.d-sect b {
    color: #c0c0c0;
}

.sect-default {
    margin-top: 3px;
}

.d-rows {
    display: flex;
    flex-direction: column;
    gap: 3px;
    padding-top: 1px;
    background: #1a1a1a;
}

.d-row {
    height: 64.600px;
    flex: none;
    display: grid;
    grid-template-columns: 298px 393px 96px;
    background: #242424;
    align-items: stretch;
    font-size: 27px;
}

.d-row label {
    padding: 3px 0 0 55px;
    display: flex;
    align-items: center;
    white-space: nowrap;
    overflow: hidden;
    border-right: 2px solid #1a1a1a;
    color: #b4b4b4;
}

.d-val {
    display: flex;
    align-items: center;
    padding-left: 32px;
    border-right: 2px solid #1a1a1a;
}

.inp {
    width: 310px;
    height: 47px;
    padding-left: 22px;
    line-height: 40px;
    background: #0e0e0e;
    border: 2px solid #2e2e2e;
    border-radius: 6px;
    color: #bcbcbc;
    font-size: 25.500px;
}

.inp.wide {
    width: 351px;
}

.inp.bright {
    color: #e8e8e8;
    line-height: 44px;
}

.d-check {
    width: 41px;
    height: 44px;
    background: #0e0e0e;
    border: 2px solid #2e2e2e;
    border-radius: 5px;
}

.type-select {
    width: 257px;
    height: 57px;
    display: flex;
    align-items: center;
    padding: 0 40px 0 23px;
    gap: 14px;
    background: #0e0e0e;
    border: 2px solid #2e2e2e;
    border-radius: 6px;
    color: #bcbcbc;
    font-size: 26px;
}

.type-select .chev-ic {
    margin-left: auto;
}

.type-pill.after {
    margin: 0 12px;
}

.cat-combo {
    width: 310px;
    height: 50px;
    display: flex;
    align-items: center;
    background: #0e0e0e;
    border: 2px solid #2e2e2e;
    border-radius: 8px;
    padding-left: 17px;
}

.cat-inner {
    width: 198px;
    height: 46px;
    line-height: 42px;
    padding-left: 20px;
    border: 2px solid #2e2e2e;
    border-radius: 8px;
    font-size: 27px;
}

.cat-combo .chev-ic {
    margin-left: 26px;
}

.rep-select {
    width: 310px;
    height: 53px;
    display: flex;
    align-items: center;
    justify-content: space-between;
    padding: 0 30px 0 18px;
    background: #0e0e0e;
    border: 2px solid #2e2e2e;
    border-radius: 7px;
    color: #d8d8d8;
    font-size: 33px;
}

.rep-select.off {
    background: #383838;
    border-color: #484848;
    color: #7e7e7e;
}

.plain-row {
    display: flex;
    position: relative;
}

.plain-row label {
    border: none;
}

.side-tri {
    position: absolute;
    left: 16px;
    top: 19px;
    width: 16px;
    height: 26px;
    color: #6e6e6e;
}

.tri-label {
    position: relative;
}

.tri-label .sect-tri {
    position: absolute;
    left: 13px;
    top: 25px;
}

.value-row label {
    padding-left: 95px;
    background: linear-gradient(90deg, #242424 27px, #1c1c1c 27px, #1c1c1c 39px, #242424 39px);
}

.value-row .inp {
    height: 46px;
}

/* status bar */
.statusbar {
    height: 80px;
    flex: none;
    display: flex;
    background: #242424;
    border-left: 4px solid #151515;
    font-size: 33.500px;
}

.st-item {
    height: 100%;
    display: flex;
    align-items: center;
    color: #bcbcbc;
    border-right: 4px solid #151515;
}

.st-ic {
    width: 40px;
    height: 46px;
}

.st-drawer { width: 332px; padding-left: 24px; gap: 10px; }
.st-log { width: 271px; padding-left: 32px; gap: 14px; }
.log-ic { width: 30px; height: 48px; }
.st-cmd { flex: 1; padding-left: 34px; gap: 12px; }
.st-cmd .chev-ic { margin-left: 8px; }

.console {
    width: 665px;
    height: 54px;
    margin-left: 22px;
    padding-left: 20px;
    line-height: 46px;
    background: #0e0e0e;
    border: 2px solid #2e2e2e;
    border-radius: 6px;
    color: #555;
    font-family: "DejaVu Sans Mono", monospace;
    font-size: 29.800px;
}

.st-right {
    width: 625px;
    padding-left: 34px;
    border-right: none;
    gap: 12px;
    position: relative;
}

.st-sep {
    width: 2px;
    height: 60px;
    margin: 0 11px;
    background: #1a1a1a;
}

.rev-ic {
    width: 35px;
    height: 46px;
}

.grip {
    position: absolute;
    right: 28px;
    bottom: 17px;
    width: 17px;
    height: 17px;
}

/* windows taskbar */
.taskbar {
    height: 120px;
    flex: none;
    display: flex;
    align-items: center;
    background: #dedded;
    border-top: 3px solid #b9b9c6;
    font-family: "Open Sans", sans-serif;
    color: #1a1a1a;
}

.weather {
    width: 1005px;
    display: flex;
    align-items: center;
    padding-left: 48px;
}

.weather-ic {
    width: 60px;
    height: 50px;
    margin-top: 8px;
}

.weather-text {
    display: flex;
    flex-direction: column;
    margin: -2px 0 0 17px;
    font-size: 28px;
    line-height: 40px;
}

.w-desc {
    color: #555;
    font-size: 29px;
}

.start {
    width: 58px;
    height: 58px;
}

.task-search {
    width: 538px;
    height: 78px;
    margin: 0 12px 0 37px;
    display: flex;
    align-items: center;
    padding-left: 28px;
    background: #f6f6fa;
    border: 2px solid #cfcfda;
    border-bottom-width: 4px;
    border-radius: 40px;
    color: #555;
}

.ts-ic {
    width: 36px;
    height: 40px;
    color: #222;
}

.task-search span {
    margin-left: 26px;
    font-size: 29px;
}

.bing {
    width: 44px;
    height: 62px;
    margin-left: auto;
    margin-right: 8px;
}

.tiles {
    display: flex;
}

.tile {
    width: 110px;
    height: 117px;
    position: relative;
    display: flex;
    align-items: center;
    justify-content: center;
    padding-bottom: 14px;
}

.app {
    width: 60px;
    height: 60px;
}

.tile-dot {
    position: absolute;
    left: 48px;
    bottom: 9px;
    width: 14px;
    height: 14px;
    border-radius: 7px;
    background: #777;
    transform: scale(.7, 1);
}

.ue-tile {
    background: #eeeef5;
    border-radius: 8px;
    width: 96px;
    margin: 0 7px;
    height: 112px;
}

.ue-light {
    color: #fff;
}

.tile-bar {
    position: absolute;
    left: 27px;
    bottom: 0;
    width: 42px;
    height: 10px;
    border-radius: 5px 5px 0 0;
    background: #0a78d4;
}

.mail .app {
    width: 60px;
}

.mail-badge {
    position: absolute;
    right: 17px;
    top: 8px;
    width: 34px;
    height: 40px;
    border-radius: 20px;
    background: #0a6cc4;
    color: #fff;
    text-align: center;
    font-size: 22px;
    line-height: 40px;
}

.tray {
    margin-left: auto;
    padding-right: 50px;
    display: flex;
    align-items: center;
}

.tray-chev {
    width: 28px;
    height: 16px;
    margin-right: 46px;
}

.tray-ic {
    width: 40px;
    height: 40px;
    margin-right: 20px;
}

.tray-cloud {
    margin-right: 40px;
}

.tray-batt {
    margin-right: 6px;
}

.clock {
    width: 172px;
    display: flex;
    flex-direction: column;
    align-items: flex-end;
    font-size: 29.500px;
    line-height: 40px;
    margin-right: 18px;
}

.notif {
    width: 40px;
    height: 40px;
    border-radius: 20px;
    background: #0a6cc4;
    color: #fff;
    text-align: center;
    font-size: 22px;
    line-height: 40px;
}

.annotations {
    position: absolute;
    left: 0;
    top: 0;
    width: 3840px;
    height: 2400px;
    pointer-events: none;
}
```
